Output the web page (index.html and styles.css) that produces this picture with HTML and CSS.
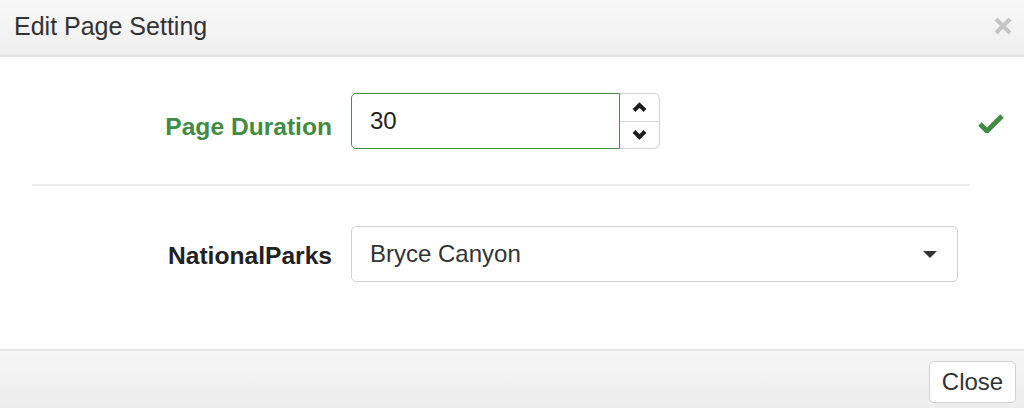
FILE: index.html
```html
<!DOCTYPE html>
<html>
<head>
<meta charset="utf-8">
<link rel="stylesheet" href="styles.css">
</head>
<body>
<div class="modal">
  <div class="modal-header">
    <h4 class="modal-title">Edit Page Setting</h4>
    <button class="close" aria-label="Close">
      <svg width="18" height="18" viewBox="0 0 18 18"><path d="M2 2 L16 16 M16 2 L2 16" stroke="#c4c4c4" stroke-width="4" stroke-linecap="butt"/></svg>
    </button>
  </div>
  <div class="modal-body">
    <div class="form-row has-success">
      <label class="form-label success">Page Duration</label>
      <div class="control">
        <div class="number-group">
          <div class="number-input">30</div>
          <div class="spinner">
            <span class="spin-btn">
              <svg width="15" height="10" viewBox="0 0 15 10"><path d="M2 8.5 L7.5 3 L13 8.5" fill="none" stroke="#1e1e1e" stroke-width="4"/></svg>
            </span>
            <span class="spin-btn">
              <svg width="15" height="10" viewBox="0 0 15 10"><path d="M2 1.5 L7.5 7 L13 1.5" fill="none" stroke="#1e1e1e" stroke-width="4"/></svg>
            </span>
          </div>
        </div>
      </div>
      <span class="feedback">
        <svg width="26" height="20" viewBox="0 0 26 20"><path d="M2 11 L9 18 L24 3" fill="none" stroke="#3f8c42" stroke-width="5"/></svg>
      </span>
    </div>
    <hr class="divider">
    <div class="form-row">
      <label class="form-label dark">NationalParks</label>
      <div class="control">
        <div class="select">
          <span>Bryce Canyon</span>
          <span class="caret"></span>
        </div>
      </div>
    </div>
  </div>
  <div class="modal-footer">
    <button class="btn">Close</button>
  </div>
</div>
</body>
</html>
```

FILE: styles.css
```css
* { box-sizing: border-box; }
html, body { margin: 0; padding: 0; }
body {
  width: 1024px;
  height: 408px;
  overflow: hidden;
  background: #fff;
  font-family: "Liberation Sans", Arial, sans-serif;
  color: #333;
}
.modal {
  display: flex;
  flex-direction: column;
  height: 408px;
}
.modal-header {
  height: 57px;
  display: flex;
  align-items: center;
  justify-content: space-between;
  padding: 0 12px 0 14px;
  background: linear-gradient(#f8f8f8, #efefef);
  border-bottom: 2px solid #e3e3e3;
}
.modal-title {
  margin: 0;
  font-size: 25px;
  font-weight: normal;
  color: #333;
  padding-bottom: 2px;
}
.close {
  border: 0;
  background: none;
  padding: 0;
  display: flex;
  margin-bottom: 3px;
}
.modal-body {
  flex: 1;
  padding: 36px 54px 0 32px;
}
.form-row {
  position: relative;
  display: grid;
  grid-template-columns: 300px 1fr;
  column-gap: 19px;
  align-items: center;
}
.form-label {
  text-align: right;
  font-weight: bold;
  font-size: 24.6px;
  color: #222;
  padding-top: 4px;
}
.form-label.success {
  color: #3f8c42;
  padding-top: 11px;
}
.control { padding-right: 12px; }
.number-group {
  display: flex;
  width: 309px;
  height: 56px;
}
.number-input {
  flex: 1;
  border: 1.5px solid #43913f;
  border-radius: 5px 0 0 5px;
  padding: 0 18px;
  display: flex;
  align-items: center;
  font-size: 24px;
  color: #222;
}
.spinner {
  width: 40px;
  display: flex;
  flex-direction: column;
  border: 1.5px solid #d4d4d4;
  border-left: 0;
  border-radius: 0 6px 6px 0;
}
.spin-btn {
  flex: 1;
  display: flex;
  align-items: center;
  justify-content: center;
}
.spin-btn + .spin-btn { border-top: 1.5px solid #d4d4d4; }
.feedback {
  position: absolute;
  right: -34px;
  top: 20px;
  display: flex;
}
.divider {
  margin: 35px 0 0 0;
  border: 0;
  height: 2px;
  background: #ececec;
}
.divider + .form-row { margin-top: 40px; }
.select {
  height: 56px;
  border: 1.5px solid #d0d0d0;
  border-radius: 5px;
  display: flex;
  align-items: center;
  justify-content: space-between;
  padding: 0 20px 0 18px;
  font-size: 24px;
  color: #333;
}
.caret {
  width: 0;
  height: 0;
  border-left: 7px solid transparent;
  border-right: 7px solid transparent;
  border-top: 7px solid #333;
}
.modal-footer {
  height: 59px;
  border-top: 2px solid #e6e6e6;
  background: linear-gradient(#f6f6f6, #ededed);
  display: flex;
  justify-content: flex-end;
  align-items: flex-start;
  padding: 10px 8px 0 0;
}
.btn {
  font-family: "Liberation Sans", Arial, sans-serif;
  font-size: 24px;
  color: #333;
  background: #fff;
  border: 1.5px solid #d0d0d0;
  border-radius: 5px;
  width: 87px;
  height: 42px;
  padding: 0;
}
```
